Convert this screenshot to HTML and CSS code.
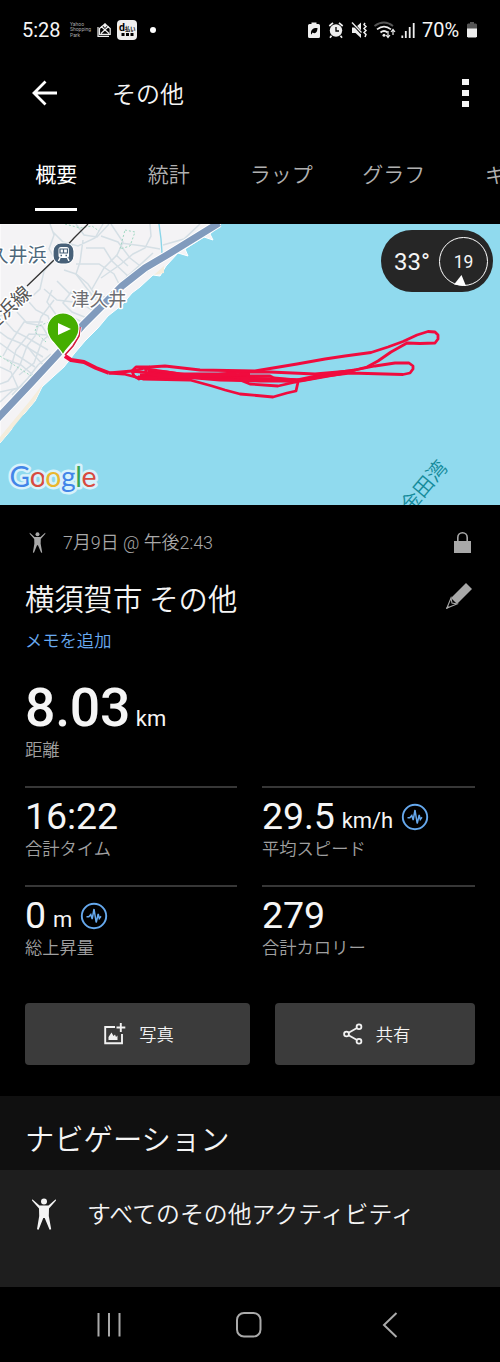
FILE: index.html
```
<!DOCTYPE html>
<html lang="ja">
<head>
  <meta charset="UTF-8" />
  <title>その他</title>
  <link rel="stylesheet" href="styles.css">
</head>
<body>
  <svg width="0" height="0" class="defs">
    <symbol id="person" viewBox="0 0 24 32">
      <circle cx="12" cy="3.5" r="3" />
      <path d="M.3 1.2 7.5 7.5H16.5L23.7 1.2 24 2.6 17 10.5 16.8 18 19.2 31.2 17.6 31.8 12.7 20H11.3L6.6 31.8 5 31.2 7.2 18 7 10.5 0 2.6Z" />
    </symbol>
    <symbol id="pulse" viewBox="0 0 28 28">
      <circle cx="14" cy="14" r="12.2" stroke-width="1.9" />
      <path d="M6.5 14.8H8.8L10.8 12.5 12.2 17 14 7 16.2 20.5 18.2 12 19.3 16.5 21 14.3" stroke-width="1.5" />
    </symbol>
  </svg>

  <div class="status">
    <span class="clock">5:28</span>
    <span class="tiny">Yahoo<br>Shopping<br>Park</span>
    <svg class="s-mail" width="14" height="14" viewBox="0 0 14 14"><path d="M1 4V13.3H12M2.5 5.5 8 1 13.2 5.5V11.3H2.5ZM4 10.5 11.8 3.2M4 3.2 12 10.5" /><path class="fill" d="M6 2.5 8 0 10 2.5 8 5Z" /></svg>
    <svg class="s-app" width="20" height="20" viewBox="0 0 20 20">
      <rect class="fill" width="20" height="20" rx="4" />
      <text x="2" y="11" font-size="10.5">d</text><text x="8" y="10.5" font-size="5.2">払い</text>
      <path class="black" d="M4.5 13H7.5V16H4.5ZM9 13H12V16H9ZM13.5 13H16.5V16H13.5Z" />
    </svg>
    <span class="dot"></span>
    <svg class="s-right" width="110" height="18" viewBox="0 0 110 18">
      <path class="fill" d="M3.5 1.5H8.5V3H10.5Q12 3 12 4.5V15.5Q12 17 10.5 17H1.5Q0 17 0 15.5V4.5Q0 3 1.5 3H3.5Z" />
      <path class="black" d="M3 13C2.5 8 6 6.5 9.5 7 9.5 11 7.5 13.5 4.5 11.5L3.5 13.5Z" />
      <circle class="fill" cx="28" cy="9.5" r="6.2" />
      <path d="M21.3 5 25 1.8M34.7 5 31 1.8M23.5 14.8 22 16.8M32.5 14.8 34 16.8" stroke-width="1.7" />
      <path class="hands" d="M28 6V10H31" />
      <path class="fill" d="M44 6.5H47.5L53 1.5V17L47.5 12H44Z" />
      <path class="slash" d="M44.5 2 53.5 12" /><path d="M44 1.5 53.5 11.5" stroke-width="1.3" />
      <path d="M57 2 56 3.7 58 5.5 56 7.5 58 9.5 56 11.5 58 13.5 57 16" stroke-width="1.5" />
      <path class="dim" d="M66.5 5Q76-2 85 5" />
      <path d="M69 8.3Q76 2.8 83 8.3M72.5 11.5Q76 8.5 79.5 11.5" stroke-width="1.7" />
      <circle class="fill" cx="76" cy="14.2" r="1.5" />
      <path d="M80 10V16M78 14 80 16.5 82 14M85 14V9M83 11 85 8.5 87 11" stroke-width="1.2" />
      <path d="M94.3 14.5V17M97.8 10V17M101.7 6V17M105.7 2V17" stroke-width="1.8" />
    </svg>
    <span class="percent">70%</span>
    <svg class="s-battery" width="10" height="16" viewBox="0 0 10 16"><path fill="#555" d="M3 0H7V1.5H9L10 2.5V7H0V2.5L1 1.5H3Z" /><path class="fill" d="M0 6.5H10V14.5L9 15.5H1L0 14.5Z" /></svg>
  </div>

  <header class="appbar">
    <svg width="26" height="26" viewBox="0 0 26 26"><path d="M25 13H3M13.5 1.5 2 13 13.5 24.5" fill="none" stroke="#fff" stroke-width="2.8" /></svg>
    <h1>その他</h1>
    <div class="more"><i></i><i></i><i></i></div>
  </header>

  <nav class="tabs">
    <a class="active">概要</a>
    <a>統計</a>
    <a>ラップ</a>
    <a>グラフ</a>
    <a>ギア</a>
  </nav>

  <div class="map">
    <svg width="500" height="281" viewBox="0 0 500 281">
      <rect width="500" height="281" fill="#90daee" />
      <path class="land" d="M0 0H221L210 10 213 16 204 13 185 25 188 32 178 29 166 42 160 52 153 51 140 63 132 69 122 81 108 92 98 104 85 117 74 130 64 143 54 152 42 163 35 177 24 190 18 193 11 206 0 219Z" />
      <path d="M164 42V49L154 51ZM43 160 35 177 24 190 11 206 0 219V213L14 196 29 178Z" fill="#f5eddc" />
      <!-- side streets -->
      <g class="streets">
        <path d="M50 0 54 11 49 25 55 35 44 47 40 65 24 80 9 89 0 92M53 8 63 18 78 22 95 14 103 0M76 0 84 11 97 13 109 0M83 16 80 38 76 50 85 62 97 77" />
        <path d="M101 12 118 18 130 34 148 48M111 0 123 18 117 31 104 44 92 65M150 0 151 12 145 24 133 30 121 40 101 54M121 19 143 22 160 25" />
        <path d="M86 24 104 24 112 37 130 54M76 40 99 40 114 50 120 62M64 46 76 50 88 60 102 81M57 57 69 69 92 71 111 74M44 65 57 76 81 79 97 89" />
        <path d="M72 67 63 79 72 88 87 94M52 66 47 78 57 92 77 98M29 78 36 86 48 92 53 107M17 88 27 99 42 102 50 115M5 97 14 107 26 113 48 126M0 108 8 114 20 119 43 133M0 119 15 130 35 143" />
        <path d="M54 76 41 93 35 112 27 122 20 141 8 157 0 160M43 98 24 98 12 116 3 132M49 111 29 110 16 126 10 146M58 104 42 117 34 139 19 151" />
        <path d="M0 143 11 148 18 164 0 168M5 135 21 141 33 151 40 155M27 122 34 131 45 143M0 178 13 166 25 161" />
        <path d="M51 130 38 141 28 154 12 171M70 92 84 99M139 43 94 85M153 29 119 60M116 31 128 42M163 21 184 15 200 0" />
      </g>
      <g class="parks"><path d="M125 6 135 8 130 22 120 25ZM49 98 36 103 35 108 46 118M65 0 80 4 92 2 99 7M0 132 39 157" /></g>
      <path d="M159 0 161 15 162 29" fill="none" stroke="#8bd5e8" stroke-width="1.4" />
      <!-- coastal road -->
      <path d="M-3 195 32 158 58 130 83 101 105 79 122 62 145 44 167 31 219-1" fill="none" stroke="#fff" stroke-width="9" />
      <path d="M-3 195 32 158 58 130 83 101 105 79 122 62 145 44 167 31 219-1" fill="none" stroke="#819bbd" stroke-width="7" />
      <path class="rail" d="M88 0 74 14 53 37 27 62M9 80 0 88" />

      <text class="place station" x="-10.5" y="37.5">久井浜</text>
      <rect x="53" y="19" width="21" height="21" rx="8" fill="#476078" stroke="#fff" stroke-width="1.2" />
      <rect x="58.5" y="23" width="10.5" height="11" rx="2.5" fill="#fff" /><path d="M60 25H67.5V29H60ZM63.5 25V29" fill="none" stroke="#476078" stroke-width="1.2" /><path d="M60 34 58.5 37M67.5 34 69 37" stroke="#fff" stroke-width="1.5" /><path d="M60.5 31.5H62M65.5 31.5H67" stroke="#476078" stroke-width="1.4" />
      <text class="place line" transform="translate(-10 109) rotate(-42)">里浜線</text>
      <text class="place town" x="71" y="82">津久井</text>
      <text class="bay" transform="translate(410 290) rotate(-50)">金田湾</text>

      <path d="M65 131 73 122 79 112 80 103" fill="none" stroke="#fff" stroke-width="3.4" /><path d="M65 131 73 122 79 112 80 103" fill="none" stroke="#d11c3c" stroke-width="1.6" />
      <!-- gps track -->
      <g class="track">
        <path class="start" d="M65 132 71 136 84 138 96 144 109 149" />
        <path d="M109 149 132 147 150 143 165 142 200 146 255 147 273 144 297 140 325 135 345 132 371 128.500 388 123 403 117.500 417 111 428 107.500 435 108 438 111 438 115 435 119 420 119.500 407 119 391 128 378 137 367 143 355 146 320 151 296 156 274 154 270 152 250 152 220 152" />
        <path d="M138 153 188 154 240 148 270 148 315 150 350 147 375 142 395 139 409 139 413 142 413 145 410 149 403 150.500 350 149 325 152 304 156 240 154 140 151" />
        <path d="M109 149 124 150 143 155 190 156 212 162 225 166 240 170 273 173 287 169 296 167 298 158 270 155 230 154 202 153 166 148 148 147" />
        <path d="M150 143 136 143 132 147 134 152 139 155 144 153 146 147 145 143M132 147 150 149 202 153 240 156 250 160 278 162 300 157 345 149" />
        <path d="M138 154 210 152 250 150 M148 150 220 156 260 157 297 157M146 145 180 150 235 150" />
      </g>
      <path d="M63 131C59 122 47 116 47 105A15.800 15.800 0 0 1 79 105C79 116 67 122 63 131Z" fill="#45ae00" stroke="#fff" stroke-width="1.2" />
      <path d="M58 99V111L71 105Z" fill="#fff" />
      <text class="google" x="9.500" y="263"><tspan fill="#4285e8">G</tspan><tspan fill="#d84b3f">o</tspan><tspan fill="#eab62d">o</tspan><tspan fill="#4285e8">g</tspan><tspan fill="#35a456">l</tspan><tspan fill="#d84b3f">e</tspan></text>
    </svg>
    <div class="weather">
      <span>33°</span>
      <div class="wind">19<svg width="12" height="11" viewBox="0 0 12 11"><path d="M7.5 0 12 11 0 9.5Z" fill="#fff" /></svg></div>
    </div>
  </div>

  <section class="summary">
    <div class="date">
      <svg width="17" height="21"><use href="#person" /></svg>
      <span>7月9日 @ 午後2:43</span>
      <svg class="lock" width="17" height="21" viewBox="0 0 17 21"><path d="M0 9H17V21H0Z" /><path d="M3.8 10V5.500A4.700 4.700 0 0 1 13.200 5.500V10" fill="none" stroke="#a8a8a8" stroke-width="1.6" /></svg>
    </div>
    <div class="title">
      <h2>横須賀市 その他</h2>
      <svg width="26" height="26" viewBox="0 0 26 26"><path d="M20 0 26 6 11 21 5 15Z" /><path d="M5 15 .9 25.1 11 21 6 20Z" fill="none" stroke="#a8a8a8" stroke-width="1.1" /><path d="M0 26 1.5 22.5 3.5 24.5Z" /></svg>
    </div>
    <a class="memo">メモを追加</a>

    <div class="distance"><b>8.03</b> <small>km</small></div>
    <div class="label">距離</div>

    <div class="stats">
      <div class="stat">
        <div class="value">16:22</div>
        <div class="label">合計タイム</div>
      </div>
      <div class="stat">
        <div class="value">29.5<small>km/h</small><svg class="pulse" width="28" height="28"><use href="#pulse" /></svg></div>
        <div class="label">平均スピード</div>
      </div>
      <div class="stat">
        <div class="value">0<small>m</small><svg class="pulse" width="28" height="28"><use href="#pulse" /></svg></div>
        <div class="label">総上昇量</div>
      </div>
      <div class="stat">
        <div class="value">279</div>
        <div class="label">合計カロリー</div>
      </div>
    </div>

    <div class="buttons">
      <button><svg width="22" height="22" viewBox="0 0 22 22"><path d="M11 4H1.2V20.2H18V11M16.8 0V9M12.5 4.5H21.3" fill="none" stroke="#f2f2f2" stroke-width="1.9" /><path d="M4.5 17V14L7.5 9.5 9.5 13 11 11.5 12 14 13.5 12.5V17Z" fill="#f2f2f2" /></svg>写真</button>
      <button><svg width="20" height="22" viewBox="0 0 20 22"><g fill="none" stroke="#f2f2f2" stroke-width="1.8"><circle cx="3.5" cy="11" r="2.4" /><circle cx="16" cy="3.8" r="2.4" /><circle cx="16" cy="18.2" r="2.4" /><path d="M5.6 9.8 14 5M5.6 12.2 14 17" /></g></svg>共有</button>
    </div>
  </section>

  <h3 class="nav-title">ナビゲーション</h3>
  <div class="nav-item">
    <svg width="24" height="32"><use href="#person" /></svg>
    <span>すべてのその他アクティビティ</span>
  </div>

  <footer class="softkeys">
    <svg width="24" height="24" viewBox="0 0 24 24"><path d="M1.5 0V23.5M12 0V23.5M22.5 0V23.5" /></svg>
    <svg width="26" height="26" viewBox="0 0 26 26"><rect x="1" y="1" width="23.5" height="23.5" rx="7" /></svg>
    <svg width="26" height="26" viewBox="0 0 26 26"><path d="M19.5 1 7 13 19.5 25" /></svg>
  </footer>
</body>
</html>
```
FILE: styles.css
```
* { box-sizing: border-box; }
body {
  margin: 0;
  width: 500px;
  background: #000;
  color: #f5f5f5;
  font-family: Roboto, 'Noto Sans CJK JP', sans-serif;
}
h1, h2, h3 { margin: 0; font-weight: 350; }
svg { display: block; flex: none; }
.defs { position: absolute; }

/* status bar */
.status {
  height: 60px;
  display: flex;
  align-items: center;
  padding-left: 22px;
  font-size: 20px;
}
.status svg { fill: none; stroke: #eee; stroke-width: 1.2; }
.status .fill { fill: #eee; stroke: none; }
.status .black, .s-app text { fill: #000; stroke: none; }
.s-app text { font-weight: bold; }
.status .hands { stroke: #000; stroke-width: 1.3; }
.status .slash { stroke: #000; stroke-width: 2.8; }
.status .dim { stroke: #555; stroke-width: 1.8; }
.s-battery path { stroke: none; }
.clock { width: 48px; }
.tiny { width: 27px; font-size: 5px; line-height: 5.5px; color: #aaa; }
.s-app { margin-left: 6px; }
.dot { width: 6px; height: 6px; margin-left: 13px; border-radius: 50%; background: #fff; }
.s-right { margin-left: 152px; }
.percent { margin-left: 4px; width: 41px; }
.s-battery { margin-left: 4px; }

/* header */
.appbar { height: 65px; display: flex; align-items: center; padding: 0 31px 0 32px; }
.appbar h1 { font-size: 24px; margin-left: 54px; }
.more { margin-left: auto; display: flex; flex-direction: column; gap: 5px; }
.more i { width: 7px; height: 6px; background: #f5f5f5; }

.tabs {
  height: 99px;
  display: grid;
  grid-template-columns: repeat(5, 112.5px);
  justify-items: center;
  align-items: end;
  overflow: hidden;
  padding-bottom: 13px;
}
.tabs a {
  height: 51px; line-height: 31px;
  font-size: 21px; font-weight: 350; color: #b0b0b0;
  border-bottom: 3px solid transparent;
}
.tabs .active { color: #fff; border-color: #fff; font-weight: 400; }

/* map */
.map { position: relative; height: 281px; }
.land { fill: #f4f3f5; stroke: #fff; }
.streets { fill: none; stroke: #d5dfe5; stroke-width: 1.5; }
.parks { fill: none; stroke: #a0d8c2; stroke-dasharray: 2 2; }
.rail { fill: none; stroke: #333; stroke-width: 1.3; }
.place { paint-order: stroke; stroke: #fff; stroke-width: 3px; stroke-linejoin: round; font-size: 19px; }
.station { fill: #4e687b; }
.line { fill: #555; }
.town { fill: #6e6e72; font-size: 18.5px; }
.bay { fill: #158b9b; font-size: 20px; font-weight: 350; }
.track path { fill: none; stroke: #f00b3e; stroke-width: 2.8; stroke-linejoin: round; }
.track .start { stroke-width: 4; }
.google {
  font-family: Lato, sans-serif;
  font-size: 28.5px;
  letter-spacing: -.5px;
  paint-order: stroke; stroke: #d8f2fb; stroke-width: 5px; stroke-linejoin: round;
}
.weather {
  position: absolute; top: 6px; right: 7px;
  width: 112px; height: 62px; border-radius: 31px;
  background: #262626;
  display: flex; align-items: center; justify-content: space-between;
  padding: 0 5px 0 13px;
  font-size: 24px;
}
.weather span { margin-top: 2px; }
.wind {
  position: relative;
  width: 49px; height: 49px; border: 1.5px solid #fff; border-radius: 50%;
  font-size: 17.5px; line-height: 48px; text-align: center;
}
.wind svg { position: absolute; left: 14px; bottom: -1px; }

/* activity summary */
.summary { height: 591px; padding: 17px 25px 0; }
.date {
  height: 40px; padding-left: 4px;
  display: flex; align-items: center;
  font-size: 17.9px; font-weight: 350; color: #a8a8a8;
}
.date svg, .title svg { fill: #a8a8a8; }
.date span { margin: -3px 0 0 17px; }
.date .lock { margin-left: auto; margin-right: 4px; }
.title { height: 58px; margin-top: 6px; display: flex; align-items: center; justify-content: space-between; }
.title h2 { font-size: 29.3px; }
.title svg { margin: 0 3px 3px 0; }
.memo { display: block; height: 26px; line-height: 30px; font-size: 17.3px; font-weight: 350; color: #69aaf0; }
.distance { height: 64px; margin-top: 22px; line-height: 68px; font-size: 22px; white-space: nowrap; }
.distance b { font-size: 53.5px; font-weight: 500; letter-spacing: -.2px; }
.distance small { font-size: 22px; }
.label { height: 24px; line-height: 24px; font-size: 17.3px; font-weight: 350; color: #a0a0a0; }
.stats { margin-top: 24px; display: grid; grid-template-columns: 212px 213px; column-gap: 25px; }
.stat { height: 99px; border-top: 2px solid #373737; }
.value { height: 49px; padding-top: 5px; display: flex; line-height: 46px; font-size: 37.5px; letter-spacing: -.1px; }
.value small { margin-left: 7px; font-size: 22px; line-height: 56px; }
.pulse { margin: 10px 0 0 8px; fill: none; stroke: #66a9ee; }
.buttons { margin-top: 19px; display: grid; grid-template-columns: 225px 200px; column-gap: 25px; }
button {
  height: 62px; padding: 0 0 2px 3px; border: 0; border-radius: 4px;
  background: #3b3b3b; color: #f5f5f5;
  display: flex; align-items: center; justify-content: center; gap: 13px;
  font: 350 17.3px Roboto, 'Noto Sans CJK JP', sans-serif;
}
button svg { position: relative; top: 1px; }

/* navigation */
.nav-title { height: 74px; padding: 6px 25px 0; background: #101010; font-size: 29.3px; line-height: 76px; }
.nav-item {
  height: 117px; padding: 28px 32px;
  display: flex; align-items: flex-start;
  background: #1e1e1e; font-size: 23.9px; line-height: 33px; font-weight: 350;
}
.nav-item svg { fill: #f5f5f5; }
.nav-item span { margin: 1px 0 0 31px; white-space: nowrap; }
.softkeys { height: 75px; display: flex; align-items: center; gap: 115px; padding-left: 97px; }
.softkeys svg { fill: none; stroke: #aaa; stroke-width: 2; }
```
